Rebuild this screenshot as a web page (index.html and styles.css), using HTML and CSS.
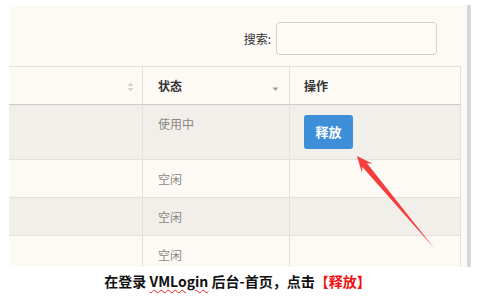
FILE: index.html
```html
<!DOCTYPE html>
<html lang="zh">
<head>
<meta charset="utf-8">
<link rel="stylesheet" href="styles.css">
</head>
<body>
<div class="frame">
  <div class="panel">
    <div class="toolbar">
      <span class="label">搜索:</span>
      <span class="input"></span>
    </div>
    <div class="grid">
      <div class="row head">
        <div class="cell c1"><svg class="sort" width="7" height="10" viewBox="0 0 7 10"><path d="M3.5 0.5 L6.5 4 L0.5 4 Z M0.5 6 L6.5 6 L3.5 9.5 Z" fill="#d6d3cf"/></svg></div>
        <div class="cell c2"><span>状态</span><svg class="sortdown" width="7" height="4" viewBox="0 0 7 4"><path d="M0.5 0.5 L6.5 0.5 L3.5 3.8 Z" fill="#9a9896"/></svg></div>
        <div class="cell c3"><span>操作</span></div>
      </div>
      <div class="row odd tall">
        <div class="cell c1"></div>
        <div class="cell c2">使用中</div>
        <div class="cell c3"><span class="btn">释放</span></div>
      </div>
      <div class="row even">
        <div class="cell c1"></div>
        <div class="cell c2">空闲</div>
        <div class="cell c3"></div>
      </div>
      <div class="row odd">
        <div class="cell c1"></div>
        <div class="cell c2">空闲</div>
        <div class="cell c3"></div>
      </div>
      <div class="row even last">
        <div class="cell c1"></div>
        <div class="cell c2">空闲</div>
        <div class="cell c3"></div>
      </div>
    </div>
  </div>
  <div class="scroll"></div>
</div>
<p class="caption">在登录 <span class="spell">VMLogin</span> 后台-首页，点击<span class="red">【释放】</span></p>
<svg class="arrow" width="479" height="299" viewBox="0 0 479 299">
  <polygon points="357,156 372.6,163.8 367,163.3 434,248 362.4,167.1 361.9,172.8" fill="#f43d3d"/>
</svg>
</body>
</html>
```

FILE: styles.css
```css
html, body {
  margin: 0;
  padding: 0;
  background: #ffffff;
  font-family: "Noto Sans CJK SC", "Noto Sans", sans-serif;
}

body {
  position: relative;
  width: 479px;
  height: 299px;
  overflow: hidden;
}

.frame {
  display: flex;
  padding: 5px 0 0 9px;
  height: 262px;
}

.panel {
  width: 458px;
  height: 262px;
  background: #fdf9f4;
  overflow: hidden;
}

.scroll {
  width: 4px;
  height: 262px;
  background: #d8d8d8;
}

.toolbar {
  height: 61px;
  box-sizing: border-box;
  display: flex;
  justify-content: flex-end;
  align-items: flex-start;
  padding: 17px 30px 0 0;
}

.label {
  font-size: 12px;
  line-height: 33px;
  color: #333;
  margin-right: 5px;
}

.input {
  width: 159px;
  height: 31px;
  border: 1px solid #d4d1cd;
  border-radius: 4px;
  background: #fffcf8;
}

.grid {
  width: 452px;
  border-top: 1px solid #e4e0dc;
}

.row {
  display: grid;
  grid-template-columns: 134px 147px 171px;
  height: 37px;
  border-bottom: 1px solid #e4e0dc;
}

.row.head {
  border-bottom-color: #c9ccce;
  background: #fdf9f4;
}

.row.tall {
  height: 54px;
}

.row.odd {
  background: #f2eeea;
}

.row.even {
  background: #fdf9f4;
}

.row.last {
  height: 40px;
}

.cell {
  box-sizing: border-box;
  border-right: 1px solid #e4e0dc;
  font-size: 12px;
  line-height: 17px;
  color: #8a8784;
  padding: 10px 0 0 15px;
}

.cell.c3 {
  padding-left: 14px;
}

.head .cell {
  display: flex;
  align-items: center;
  padding-top: 0;
  color: #333;
  font-weight: bold;
  font-size: 12px;
}

.head .c1 {
  justify-content: flex-end;
  padding-right: 8px;
}

.head .c2 {
  justify-content: space-between;
  padding-right: 10px;
}

.sort {
  display: block;
  margin-top: 3px;
}

.sortdown {
  display: block;
  margin-top: 6px;
}

.btn {
  display: block;
  width: 49px;
  height: 34px;
  line-height: 34px;
  text-align: center;
  background: #3d8fda;
  color: #ffffff;
  font-weight: bold;
  font-size: 13px;
  border-radius: 3px;
}

.caption {
  margin: 0;
  height: 32px;
  line-height: 29px;
  text-align: center;
  font-size: 14px;
  font-weight: bold;
  color: #111;
  padding-right: 4px;
}

.spell {
  text-decoration: underline wavy #e02020;
  text-decoration-thickness: 1px;
  text-underline-offset: 2px;
}

.red {
  color: #f01010;
}

.arrow {
  position: absolute;
  left: 0;
  top: 0;
  pointer-events: none;
}
```
